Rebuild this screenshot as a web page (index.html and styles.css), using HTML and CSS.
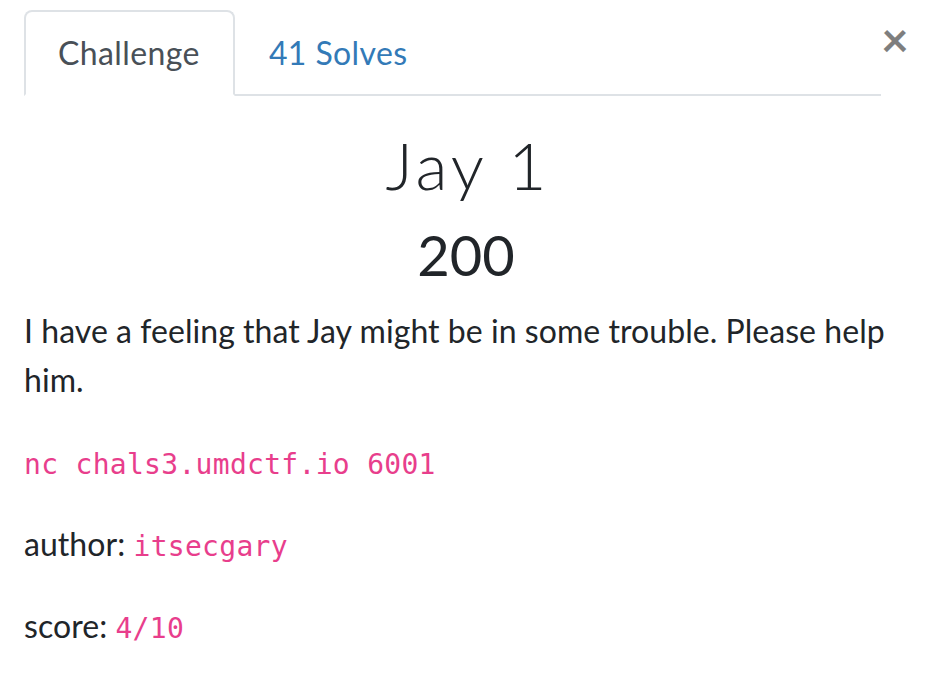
FILE: index.html
```html
<!DOCTYPE html>
<html>
<head>
<meta charset="utf-8">
<link rel="stylesheet" href="styles.css">
</head>
<body>
<div class="modal">
  <div class="header">
    <nav class="tabs">
      <a class="tab active">Challenge</a>
      <a class="tab">41 Solves</a>
    </nav>
    <button class="close" type="button">×</button>
  </div>
  <div class="content">
    <h2 class="title">Jay 1</h2>
    <h3 class="value">200</h3>
    <p>I have a feeling that Jay might be in some trouble. Please help him.</p>
    <p><code>nc chals3.umdctf.io 6001</code></p>
    <p>author: <code>itsecgary</code></p>
    <p>score: <code>4/10</code></p>
  </div>
</div>
</body>
</html>
```
FILE: styles.css
```css
* { box-sizing: border-box; }
html, body { margin: 0; background: #fff; }
body {
  font-family: "Lato", "Liberation Sans", sans-serif;
  color: #212529;
  font-size: 32px;
  line-height: 49px;
}
.modal {
  padding: 10px 33px 0 24px;
}
.header {
  display: flex;
  align-items: flex-start;
}
.tabs {
  flex: 1;
  display: flex;
  border-bottom: 2px solid #dee2e6;
}
.tab {
  display: block;
  padding: 16px 33px 17px 32px;
  border: 2px solid transparent;
  border-radius: 8px 8px 0 0;
  margin-bottom: -2px;
  color: #337ab7;
  text-decoration: none;
  letter-spacing: 0.4px;
}
.tab.active {
  color: #495057;
  background: #fff;
  border-color: #dee2e6 #dee2e6 #fff;
}
.close {
  background: none;
  border: 0;
  padding: 0;
  margin: 0;
  width: 27px;
  font-family: "Lato", sans-serif;
  font-size: 48px;
  font-weight: 700;
  line-height: 1;
  color: #000;
  opacity: 0.5;
  text-align: right;
  margin-top: 5px;
}
.title {
  margin: 29px 0 17px;
  text-align: center;
  font-size: 66px;
  font-weight: 300;
  line-height: 1.2;
  letter-spacing: 4px;
  padding-left: 4px;
}
.value {
  margin: 0 0 18px;
  text-align: center;
  font-size: 56px;
  font-weight: 400;
  line-height: 1.2;
}
p { margin: 0 0 33px; letter-spacing: 0.05px; }
code {
  font-family: "DejaVu Sans Mono", "Liberation Mono", monospace;
  font-size: 28px;
  line-height: 1;
  color: #e83e8c;
  letter-spacing: 0.3px;
}
```
